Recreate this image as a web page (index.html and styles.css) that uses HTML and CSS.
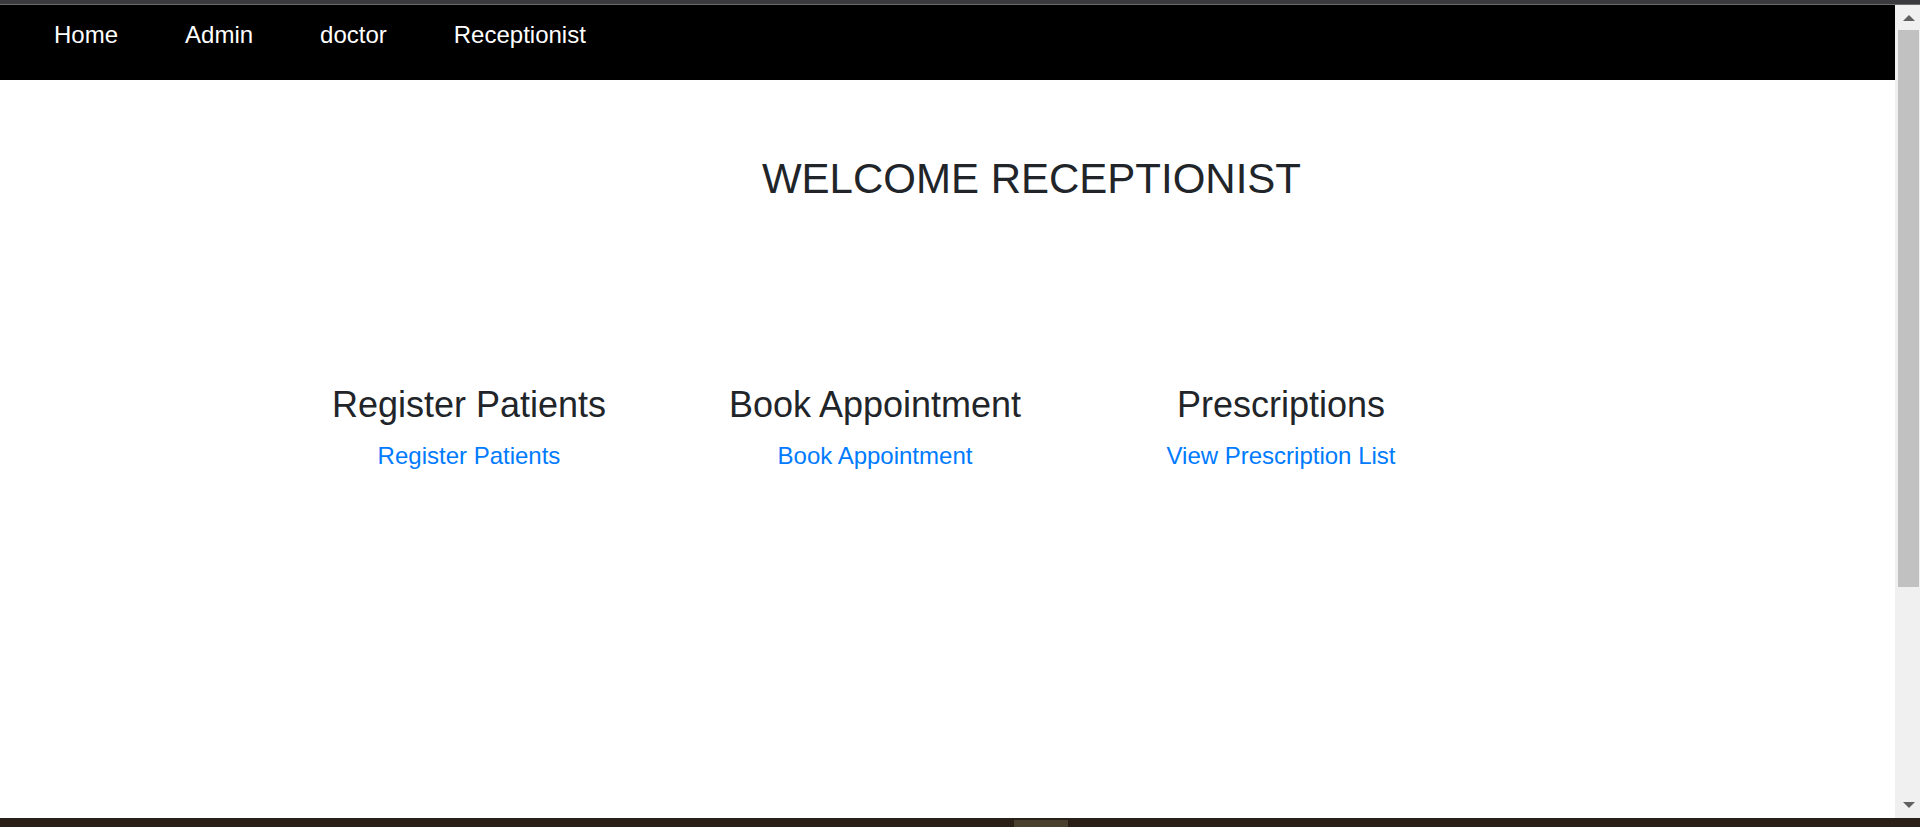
FILE: index.html
```html
<!DOCTYPE html>
<html lang="en">
<head>
<meta charset="utf-8">
<title>Welcome Receptionist</title>
<link rel="stylesheet" href="styles.css">
</head>
<body>
<div class="screen">
  <div class="top-strip"></div>
  <div class="window">
    <div class="page">
      <nav class="navbar">
        <a class="nav-link" href="#">Home</a>
        <a class="nav-link" href="#">Admin</a>
        <a class="nav-link" href="#">doctor</a>
        <a class="nav-link" href="#">Receptionist</a>
      </nav>
      <h1 class="welcome">WELCOME RECEPTIONIST</h1>
      <div class="cards">
        <div class="card">
          <h3 class="card-title">Register Patients</h3>
          <a class="card-link" href="#">Register Patients</a>
        </div>
        <div class="card">
          <h3 class="card-title">Book Appointment</h3>
          <a class="card-link" href="#">Book Appointment</a>
        </div>
        <div class="card">
          <h3 class="card-title">Prescriptions</h3>
          <a class="card-link" href="#">View Prescription List</a>
        </div>
      </div>
    </div>
    <div class="scrollbar">
      <div class="arrow arrow-up"></div>
      <div class="thumb"></div>
      <div class="track-rest"></div>
      <div class="arrow arrow-down"></div>
    </div>
  </div>
  <div class="taskbar"><div class="task-item"></div></div>
</div>
</body>
</html>
```

FILE: styles.css
```css
html, body {
  margin: 0;
  padding: 0;
  height: 100%;
  overflow: hidden;
  background: #ffffff;
}

body {
  font-family: "Liberation Sans", Arial, sans-serif;
  color: #212529;
}

.screen {
  display: flex;
  flex-direction: column;
  width: 1920px;
  height: 827px;
}

.top-strip {
  height: 4px;
  background: #3a3a3c;
  border-bottom: 1px solid #6a6a6a;
  flex: none;
}

.window {
  display: flex;
  height: 813px;
  flex: none;
}

.page {
  width: 1895px;
  flex: none;
  background: #ffffff;
}

.navbar {
  display: flex;
  gap: 67px;
  height: 75px;
  box-sizing: border-box;
  padding: 12px 0 0 54px;
  background: #000000;
}

.nav-link {
  color: #ffffff;
  text-decoration: none;
  font-size: 24px;
  line-height: 1.5;
}

.welcome {
  margin: 78px 0 0 0;
  padding-left: 168px;
  text-align: center;
  font-size: 42px;
  font-weight: 400;
  line-height: 1;
  color: #212529;
}

.cards {
  display: grid;
  grid-template-columns: repeat(3, 406px);
  padding-left: 266px;
  margin-top: 187px;
}

.card {
  display: flex;
  flex-direction: column;
  align-items: center;
  white-space: nowrap;
}

.card-title {
  margin: 0;
  font-size: 36px;
  font-weight: 400;
  line-height: 1;
  color: #212529;
}

.card-link {
  margin-top: 21px;
  font-size: 24px;
  line-height: 1;
  color: #007bff;
  text-decoration: none;
}

.scrollbar {
  width: 25px;
  flex: none;
  display: flex;
  flex-direction: column;
  align-items: center;
  background: #f0f0f0;
  box-sizing: border-box;
  padding-left: 2px;
}

.arrow {
  width: 0;
  height: 0;
  border-left: 6px solid transparent;
  border-right: 6px solid transparent;
  flex: none;
}

.arrow-up {
  margin-top: 10px;
  border-bottom: 6px solid #606060;
}

.arrow-down {
  margin-bottom: 10px;
  border-top: 6px solid #606060;
}

.thumb {
  margin-top: 9px;
  width: 21px;
  height: 557px;
  background: #c1c1c1;
  flex: none;
}

.track-rest {
  flex: 1;
}

.taskbar {
  height: 9px;
  flex: none;
  background: #2b2017;
  position: relative;
}

.task-item {
  position: absolute;
  left: 1014px;
  top: 2px;
  width: 54px;
  height: 7px;
  background: #4a4030;
}
```
